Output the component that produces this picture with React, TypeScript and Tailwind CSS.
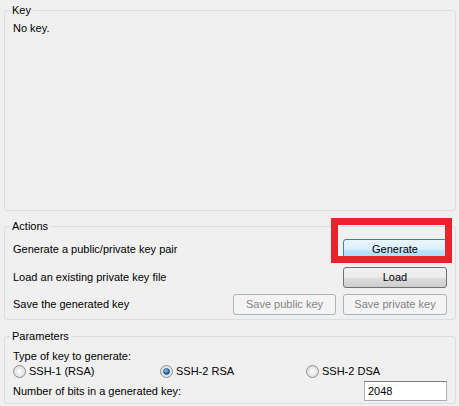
function Radio({ checked }: { checked?: boolean }) {
  return (
    <svg width="13" height="13" viewBox="0 0 13 13" className="shrink-0">
      <defs>
        <radialGradient id="rb" cx="50%" cy="50%" r="55%">
          <stop offset="0%" stopColor="#ffffff" />
          <stop offset="100%" stopColor="#d6d6d6" />
        </radialGradient>
        <radialGradient id="rd" cx="40%" cy="35%" r="70%">
          <stop offset="0%" stopColor="#8fd0f5" />
          <stop offset="60%" stopColor="#2a75b8" />
          <stop offset="100%" stopColor="#0d3d6e" />
        </radialGradient>
      </defs>
      <circle cx="6.5" cy="6.5" r="6" fill="url(#rb)" stroke="#8e8f8f" />
      <circle cx="6.5" cy="6.5" r="4.5" fill="none" stroke="#e6e6e6" />
      {checked && <circle cx="6.5" cy="6.5" r="3" fill="url(#rd)" stroke="#1c3c5e" strokeWidth="0.6" />}
    </svg>
  )
}

function Button({ label, disabled, active, className = '' }: { label: string; disabled?: boolean; active?: boolean; className?: string }) {
  const base = 'h-[21px] rounded-[3px] border flex items-center justify-center'
  if (disabled) {
    return <div className={`${base} border-[#adb2b5] bg-[#f4f4f4] text-[#838383] ${className}`}>{label}</div>
  }
  if (active) {
    return (
      <div className={`${base} border-[#3c7fb1] bg-[linear-gradient(#eaf6fd_0%,#d9f0fc_50%,#bee6fd_50%,#a7d9f5_100%)] ${className}`}>
        {label}
      </div>
    )
  }
  return (
    <div className={`${base} border-[#707070] bg-[linear-gradient(#f2f2f2_0%,#ebebeb_50%,#dddddd_50%,#cfcfcf_100%)] ${className}`}>
      {label}
    </div>
  )
}

function Group({ title, className = '', children }: { title: string; className?: string; children?: React.ReactNode }) {
  return (
    <fieldset className={`mx-[4px] mr-[3px] rounded-[3px] border border-[#d5dfe5] ${className}`}>
      <legend className="ml-[5px] px-[2px] leading-[13px]">{title}</legend>
      {children}
    </fieldset>
  )
}

export default function App() {
  return (
    <div className="relative w-[459px] h-[406px] overflow-hidden bg-[#f0f0f0] pt-[4px] text-[11px] text-black font-['Liberation_Sans',Arial,sans-serif]">
      <Group title="Key" className="h-[207px]">
        <div className="px-[8px] pt-[5px] leading-[13px]">No key.</div>
      </Group>

      <Group title="Actions" className="mt-[9px] h-[100px]">
        <div className="pl-[8px] pr-[8px] pt-[6px] flex flex-col">
          <div className="flex items-center h-[21px]">
            <span className="flex-1">Generate a public/private key pair</span>
            <Button label="Generate" active className="w-[104px]" />
          </div>
          <div className="flex items-center h-[21px] mt-[7px]">
            <span className="flex-1">Load an existing private key file</span>
            <Button label="Load" className="w-[104px]" />
          </div>
          <div className="flex items-center h-[21px] mt-[6px]">
            <span className="flex-1">Save the generated key</span>
            <Button label="Save public key" disabled className="w-[103px] mr-[7px]" />
            <Button label="Save private key" disabled className="w-[104px]" />
          </div>
        </div>
      </Group>

      <Group title="Parameters" className="mt-[10px] h-[74px]">
        <div className="pl-[8px] pr-[8px] pt-[7px] flex flex-col leading-[13px]">
          <div>Type of key to generate:</div>
          <div className="flex items-center h-[14px] mt-[1px]">
            <div className="flex items-center gap-[3px] w-[147px]">
              <Radio />
              <span>SSH-1 (RSA)</span>
            </div>
            <div className="flex items-center gap-[3px] w-[146px]">
              <Radio checked />
              <span>SSH-2 RSA</span>
            </div>
            <div className="flex items-center gap-[3px]">
              <Radio />
              <span>SSH-2 DSA</span>
            </div>
          </div>
          <div className="flex items-center h-[20px] mt-[3px]">
            <span className="flex-1">Number of bits in a generated key:</span>
            <div className="w-[83px] h-[20px] border border-[#abadb3] border-t-[#7a7a7a] bg-white flex items-center px-[3px]">2048</div>
          </div>
        </div>
      </Group>

      <div className="absolute left-[331px] top-[218px] w-[121px] h-[45px] border-[7px] border-[#e8232b]" />
    </div>
  )
}
